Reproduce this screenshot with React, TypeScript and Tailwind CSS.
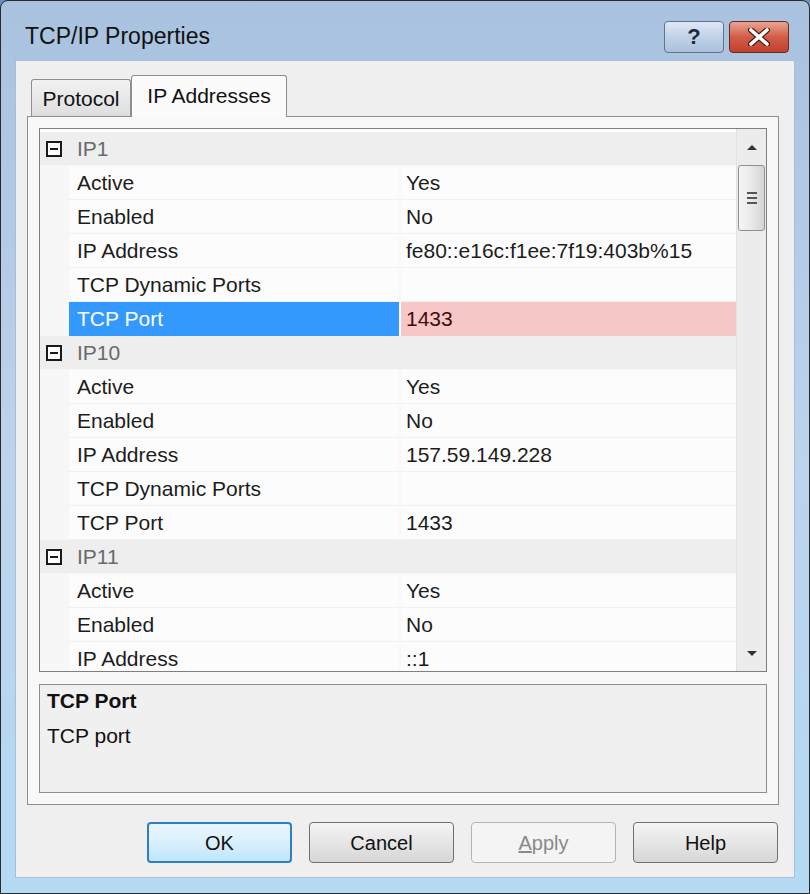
import React from "react";

type Row = { cat?: string; n?: string; v?: string; sel?: boolean };

const rows: Row[] = [
  { cat: "IP1" },
  { n: "Active", v: "Yes" },
  { n: "Enabled", v: "No" },
  { n: "IP Address", v: "fe80::e16c:f1ee:7f19:403b%15" },
  { n: "TCP Dynamic Ports", v: "" },
  { n: "TCP Port", v: "1433", sel: true },
  { cat: "IP10" },
  { n: "Active", v: "Yes" },
  { n: "Enabled", v: "No" },
  { n: "IP Address", v: "157.59.149.228" },
  { n: "TCP Dynamic Ports", v: "" },
  { n: "TCP Port", v: "1433" },
  { cat: "IP11" },
  { n: "Active", v: "Yes" },
  { n: "Enabled", v: "No" },
  { n: "IP Address", v: "::1" },
];

function MinusBox() {
  return (
    <div className="w-[16px] h-[16px] border-2 border-[#1a1a1a] bg-white flex items-center justify-center">
      <div className="w-[8px] h-[2px] bg-[#1a1a1a]" />
    </div>
  );
}

function GridRow({ r }: { r: Row }) {
  if (r.cat) {
    return (
      <div className="flex shrink-0 h-[34px] items-center bg-[#eeeeee] border-b border-[#f6f6f6]">
        <div className="w-[37px] pl-[6px] flex items-center">
          <MinusBox />
        </div>
        <span className="text-[21px] text-[#6a6a6a]">{r.cat}</span>
      </div>
    );
  }
  return (
    <div className="flex shrink-0 h-[34px]">
      <div className="w-[29px] bg-[#f7f7f7]" />
      <div
        className={
          r.sel
            ? "w-[330px] flex items-center pl-[8px] bg-[#3399ff] text-white text-[21px]"
            : "w-[330px] flex items-center pl-[8px] border-b border-[#f1f1f1] text-[#1c1c1c] text-[21px]"
        }
      >
        {r.n}
      </div>
      <div className="w-[2px] bg-[#f8f8f8]" />
      <div
        className={
          r.sel
            ? "flex-1 flex items-center pl-[5px] bg-[#f7c6c6] text-[#3e0c0c] text-[21px]"
            : "flex-1 flex items-center pl-[5px] border-b border-[#f1f1f1] text-[#1c1c1c] text-[21px]"
        }
      >
        {r.v}
      </div>
    </div>
  );
}

function Scrollbar() {
  return (
    <div className="w-[30px] h-full bg-[#ececec] border-l border-[#e2e2e2] flex flex-col items-center relative">
      <div className="h-[36px] w-full flex items-center justify-center">
        <svg width="12" height="7" viewBox="0 0 12 7">
          <path d="M1 6 L6 1 L11 6 Z" fill="#333" />
        </svg>
      </div>
      <div className="w-[27px] h-[66px] rounded-[3px] border border-[#8f8f8f] bg-gradient-to-r from-[#f6f6f6] via-[#e9e9e9] to-[#d4d4d4] flex flex-col items-center justify-center gap-[3px]">
        <div className="w-[10px] h-[2px] bg-[#555]" />
        <div className="w-[10px] h-[2px] bg-[#555]" />
        <div className="w-[10px] h-[2px] bg-[#555]" />
      </div>
      <div className="flex-1" />
      <div className="h-[36px] w-full flex items-center justify-center">
        <svg width="12" height="7" viewBox="0 0 12 7">
          <path d="M1 1 L6 6 L11 1 Z" fill="#333" />
        </svg>
      </div>
    </div>
  );
}

function Btn({
  children,
  kind,
}: {
  children: React.ReactNode;
  kind: "default" | "normal" | "disabled";
}) {
  const base =
    "w-[145px] h-[41px] rounded-[4px] flex items-center justify-center text-[20px] border";
  if (kind === "default")
    return (
      <div className={base + " border-[#2f7fc0] border-2 bg-gradient-to-b from-[#eaf6fd] via-[#d9f0fc] to-[#bee6fd] text-[#111]"}>
        {children}
      </div>
    );
  if (kind === "disabled")
    return (
      <div className={base + " border-[#b4b4b4] bg-[#f4f4f4] text-[#8a8a8a]"}>
        {children}
      </div>
    );
  return (
    <div className={base + " border-[#707070] bg-gradient-to-b from-[#f4f4f4] via-[#e6e6e6] to-[#d6d6d6] text-[#111]"}>
      {children}
    </div>
  );
}

export default function App() {
  return (
    <div className="w-[810px] h-[894px] bg-[#6b8fb5] font-['Liberation_Sans',Arial,sans-serif]">
      <div className="w-full h-full flex flex-col rounded-t-[8px] border border-[#2a2a2a] bg-gradient-to-b from-[#a8c2df] via-[#bcd3ec] to-[#b4daf4]">
        {/* title bar */}
        <div className="h-[59px] flex items-start">
          <div className="pl-[24px] pt-[24px] text-[23px] text-[#111] leading-none">
            TCP/IP Properties
          </div>
          <div className="flex-1" />
          <div className="flex gap-[5px] pt-[20px] pr-[20px]">
            <div className="w-[60px] h-[32px] rounded-[4px] border border-[#5d7591] bg-gradient-to-b from-[#dfe9f5] via-[#c0d2e6] to-[#aac1dc] flex items-center justify-center">
              <span className="text-[22px] font-bold text-[#1b2a3c] leading-none">?</span>
            </div>
            <div className="w-[60px] h-[32px] rounded-[4px] border border-[#6e2a21] bg-gradient-to-b from-[#e8a495] via-[#d25d48] to-[#c0402b] flex items-center justify-center">
              <svg width="24" height="18" viewBox="0 0 24 18">
                <path d="M4 2 L20 16 M20 2 L4 16" stroke="#4a1a12" strokeWidth="6" strokeLinecap="round" />
                <path d="M4 2 L20 16 M20 2 L4 16" stroke="#ffffff" strokeWidth="3.6" strokeLinecap="round" />
              </svg>
            </div>
          </div>
        </div>

        {/* client area */}
        <div className="flex-1 mx-[14px] mb-[15px] bg-[#f0eff0] border border-[#a9bdd4] flex flex-col pl-[11px] pr-[15px] pt-[13px]">
          {/* tabs */}
          <div className="flex items-end h-[42px] pl-[4px]">
            <div className="w-[100px] h-[37px] border border-[#8c8e94] border-b-0 rounded-t-[3px] bg-gradient-to-b from-[#f2f2f2] to-[#dedede] flex items-center justify-center text-[21px] text-[#111] pt-[2px]">
              Protocol
            </div>
            <div className="w-[156px] h-[42px] -mb-px z-10 border border-[#8c8e94] border-b-0 rounded-t-[3px] bg-[#fbfbfb] flex items-center justify-center text-[21px] text-[#111] pb-[2px]">
              IP Addresses
            </div>
          </div>
          {/* panel */}
          <div className="h-[689px] border border-[#8c8e94] bg-[#f9f8f9] flex flex-col px-[11px] pt-[11px] pb-[11px] gap-[12px]">
            <div className="h-[544px] shrink-0 border border-[#7f7f7f] bg-[#fcfcfc] flex overflow-hidden">
              <div className="flex-1 flex flex-col pt-[3px] overflow-hidden">
                {rows.map((r, i) => (
                  <GridRow key={i} r={r} />
                ))}
              </div>
              <Scrollbar />
            </div>
            <div className="flex-1 border border-[#8f8f8f] bg-[#f1f0f1] pl-[7px] pt-[4px] flex flex-col text-[21px] text-[#111]">
              <div className="font-bold h-[24px] leading-[24px]">TCP Port</div>
              <div className="h-[24px] leading-[24px] mt-[11px]">TCP port</div>
            </div>
          </div>
          {/* buttons */}
          <div className="flex justify-end gap-[17px] mt-[17px] pr-[1px]">
            <Btn kind="default">OK</Btn>
            <Btn kind="normal">Cancel</Btn>
            <Btn kind="disabled">
              <span>
                <span className="underline">A</span>pply
              </span>
            </Btn>
            <Btn kind="normal">Help</Btn>
          </div>
        </div>
      </div>
    </div>
  );
}
